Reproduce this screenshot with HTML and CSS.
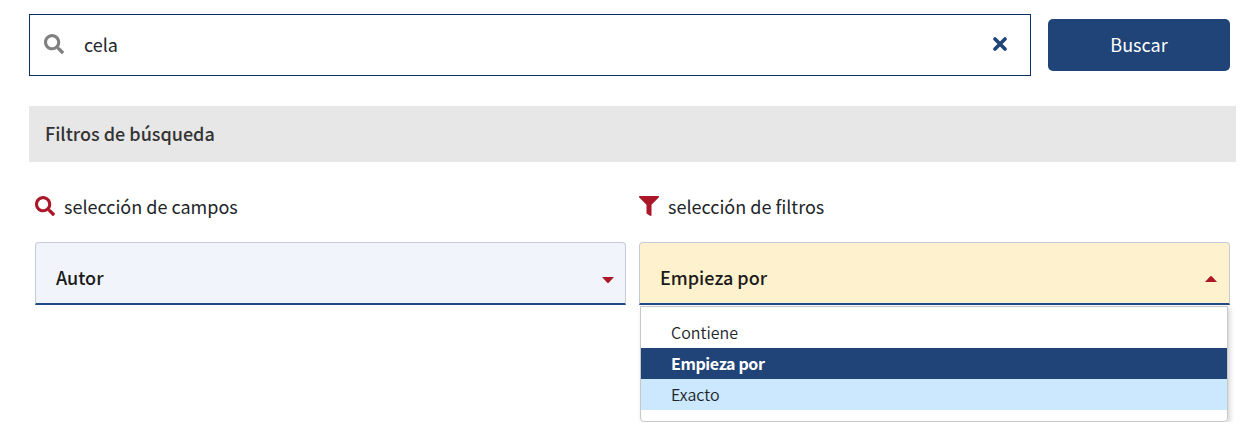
FILE: index.html
```
<!DOCTYPE html>
<html lang="es">
<head>
<meta charset="utf-8">
<title>Filtros de búsqueda</title>
<link rel="stylesheet" href="styles.css">
</head>
<body>
<form class="search">
  <div class="search-box">
    <svg class="icon icon-muted" viewBox="0 0 512 512"><path d="M505 442.7L405.3 343c-4.5-4.5-10.6-7-17-7H372c27.6-35.3 44-79.7 44-128C416 93.1 322.9 0 208 0S0 93.1 0 208s93.1 208 208 208c48.3 0 92.7-16.4 128-44v16.3c0 6.4 2.5 12.5 7 17l99.7 99.7c9.4 9.4 24.6 9.4 33.9 0l28.3-28.3c9.4-9.4 9.4-24.6.1-34zM208 336c-70.7 0-128-57.2-128-128 0-70.7 57.2-128 128-128 70.7 0 128 57.2 128 128 0 70.7-57.2 128-128 128z"/></svg>
    <span class="query">cela</span>
    <svg class="clear" viewBox="0 0 14 14"><path d="M2 2L12 12M12 2L2 12"/></svg>
  </div>
  <button class="submit" type="button">Buscar</button>
</form>
<h2 class="bar">Filtros de búsqueda</h2>
<div class="filters">
  <section class="field">
    <div class="label"><svg class="icon" viewBox="0 0 512 512"><path d="M505 442.7L405.3 343c-4.5-4.5-10.6-7-17-7H372c27.6-35.3 44-79.7 44-128C416 93.1 322.9 0 208 0S0 93.1 0 208s93.1 208 208 208c48.3 0 92.7-16.4 128-44v16.3c0 6.4 2.5 12.5 7 17l99.7 99.7c9.4 9.4 24.6 9.4 33.9 0l28.3-28.3c9.4-9.4 9.4-24.6.1-34zM208 336c-70.7 0-128-57.2-128-128 0-70.7 57.2-128 128-128 70.7 0 128 57.2 128 128 0 70.7-57.2 128-128 128z"/></svg><span>selección de campos</span></div>
    <div class="select"><span>Autor</span><svg class="caret caret-down" viewBox="0 0 12 7"><path d="M0 0H12L7 5.6Q6 6.6 5 5.6Z"/></svg></div>
  </section>
  <section class="field">
    <div class="label"><svg class="icon" viewBox="0 0 512 512"><path d="M487.976 0H24.028C2.71 0-8.047 25.866 7.058 40.971L192 225.941V432c0 7.831 3.821 15.17 10.237 19.662l80 55.98C298.02 518.69 320 507.493 320 487.98V225.941l184.947-184.97C520.021 25.896 509.338 0 487.976 0z"/></svg><span>selección de filtros</span></div>
    <div class="select open"><span>Empieza por</span><svg class="caret" viewBox="0 0 12 7"><path d="M0 7H12L7 1.4Q6 .4 5 1.4Z"/></svg></div>
    <ul class="menu">
      <li>Contiene</li>
      <li class="selected">Empieza por</li>
      <li class="hover">Exacto</li>
    </ul>
  </section>
</div>
</body>
</html>
```
FILE: styles.css
```
* { box-sizing: border-box; }
body {
  margin: 0;
  padding: 14px 7px 0 29px;
  background: #fff;
  color: #212529;
  font: 400 18px/30px "Noto Sans CJK SC", sans-serif;
}
.search { display: flex; align-items: center; gap: 17px; }
.search-box {
  display: flex;
  align-items: center;
  width: 1002px;
  height: 62px;
  padding: 0 23px 0 14px;
  border: 1px solid #0b2e67;
}
.icon { width: 20px; height: 20px; fill: #ab1729; }
.search-box .icon, .clear { margin-bottom: 2px; }
.icon-muted { fill: #808080; }
.query { flex: 1; margin-left: 20px; padding-bottom: 2px; }
.clear { width: 14px; height: 14px; fill: none; stroke: #204378; stroke-width: 3.6; stroke-linecap: round; }
.submit {
  width: 182px;
  height: 52px;
  padding: 0 0 2px;
  border: 0;
  border-radius: 5px;
  background: #204378;
  color: #fff;
  font: 400 18px/30px "Noto Sans CJK SC", sans-serif;
}
.bar {
  height: 56px;
  margin: 30px 0 0;
  padding-left: 16px;
  background: #e7e7e7;
  color: #333;
  font-size: 18px;
  font-weight: 500;
  line-height: 54px;
}
.filters { display: grid; grid-template-columns: 591px 591px; gap: 13px; padding: 29px 6px 0; }
.label { display: flex; align-items: center; gap: 9px; height: 30px; }
.label .icon { margin-top: -1px; }
.select {
  display: flex;
  align-items: center;
  justify-content: space-between;
  height: 63px;
  margin-top: 21px;
  padding: 8px 12px 0 20px;
  border: 1px solid #c5cad9;
  border-bottom: 2px solid #1f4a87;
  border-radius: 4px 4px 0 0;
  background: #f1f4fa;
  color: #1b1b1b;
  font-weight: 500;
}
.open { background: #fef1cd; }
.select span { margin-top: -1px; }
.caret { width: 12px; height: 7px; margin-top: 3px; fill: #ab1729; }
.caret-down { margin-top: 6px; margin-right: -1px; }
.menu {
  width: 588px;
  height: 116px;
  margin: 1px 0 0 1px;
  padding: 10px 0;
  list-style: none;
  border: 1px solid #c8c8c8;
  border-radius: 0 0 4px 4px;
  box-shadow: 2px 2px 5px rgba(0, 0, 0, .17);
  font-size: 16px;
  font-weight: 350;
}
.menu li { height: 31px; padding-left: 30px; line-height: 31px; }
.menu .selected { background: #204378; color: #fff; font-weight: 700; letter-spacing: -.4px; }
.hover { background: #cce8ff; }
```
